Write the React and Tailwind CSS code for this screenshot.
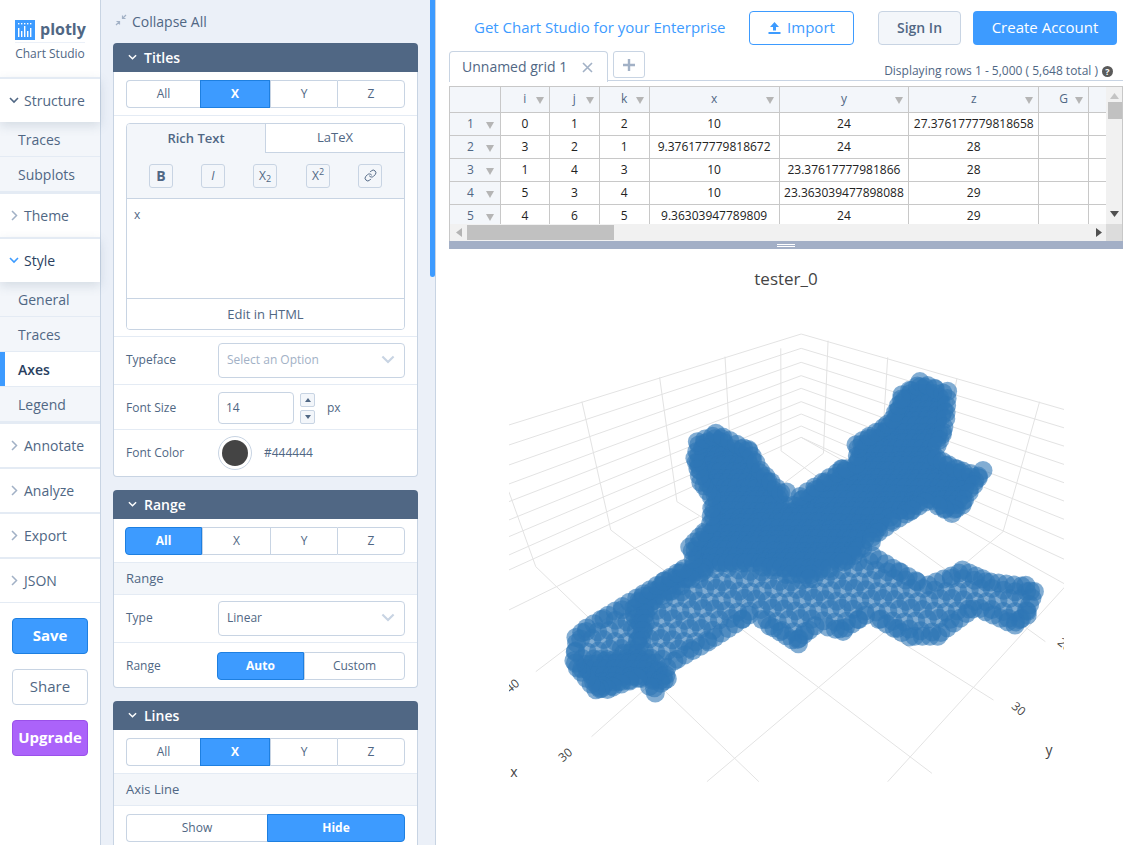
import React from "react";
import { Link as LinkIcon } from "lucide-react";

const Z = (x, y) => [480 + x / 2.6, 320 + y / 3];

const outline = [[1150,170],[1230,215],[1225,300],[1215,350],[1195,400],[1240,430],[1320,460],[1260,570],[1220,595],[1165,560],[1080,620],[1010,680],[1080,730],[1160,780],[1260,735],[1330,770],[1430,785],[1455,820],[1430,900],[1385,930],[1290,880],[1190,965],[1110,965],[1010,900],[940,950],[880,930],[820,985],[740,925],[725,885],[600,980],[500,1045],[495,1090],[445,1130],[415,1090],[330,1125],[290,1120],[240,1050],[230,1020],[240,940],[270,910],[400,820],[540,720],[535,670],[585,610],[590,540],[560,490],[545,410],[560,350],[620,325],[710,380],[740,440],[795,510],[805,530],[940,430],[965,430],[970,360],[1040,310],[1060,290],[1090,210]].map(([x, y]) => Z(x, y));
const dense = [[1150,150],[1340,460],[1220,610],[1000,700],[850,780],[720,740],[600,740],[440,860],[420,1000],[500,1050],[480,1140],[300,1130],[230,1030],[300,1020],[400,990],[400,820],[520,700],[530,400],[620,310],[800,500],[960,420],[1040,300]].map(([x, y]) => Z(x, y));

function inside(p, poly) {
  let c = false;
  for (let i = 0, j = poly.length - 1; i < poly.length; j = i++) {
    const [xi, yi] = poly[i], [xj, yj] = poly[j];
    if (yi > p[1] !== yj > p[1] && p[0] < ((xj - xi) * (p[1] - yi)) / (yj - yi) + xi) c = !c;
  }
  return c;
}
function edgeDist(p, poly) {
  let best = 1e9;
  for (let i = 0, j = poly.length - 1; i < poly.length; j = i++) {
    const [ax, ay] = poly[j], [bx, by] = poly[i];
    const dx = bx - ax, dy = by - ay;
    const t = Math.max(0, Math.min(1, ((p[0] - ax) * dx + (p[1] - ay) * dy) / (dx * dx + dy * dy)));
    best = Math.min(best, Math.hypot(p[0] - ax - t * dx, p[1] - ay - t * dy));
  }
  return best;
}
function makeCircles() {
  const out = [];
  const add = (sp, test, jit) => {
    for (let row = 0, y = 370; y < 705; y += sp * 0.87, row++) {
      for (let x = 565 + (row % 2) * sp * 0.5; x < 1045; x += sp) {
        const p = [x + Math.sin(x * 7.1 + y) * jit, y + Math.cos(y * 5.3 + x) * jit];
        if (test(p)) out.push(p);
      }
    }
  };
  add(11.5, (p) => inside(p, outline) && edgeDist(p, outline) >= 5, 1.8);
  add(6.5, (p) => inside(p, outline) && inside(p, dense) && edgeDist(p, outline) >= 7, 1);
  for (let i = 0, j = outline.length - 1; i < outline.length; j = i++) {
    const [ax, ay] = outline[j], [bx, by] = outline[i];
    const len = Math.hypot(bx - ax, by - ay);
    const n = Math.ceil(len / 9);
    for (let k = 0; k < n; k++) {
      const t = k / n;
      const nx = (by - ay) / len, ny = -(bx - ax) / len;
      const m = [ax + (bx - ax) * t, ay + (by - ay) * t];
      let p = [m[0] + nx * 5.5, m[1] + ny * 5.5];
      if (!inside(p, outline)) p = [m[0] - nx * 5.5, m[1] - ny * 5.5];
      out.push(p);
    }
  }
  return out;
}
const circles = makeCircles();

const cy = [42, 85, 127, 167, 205, 245, 282, 318, 352];
const ly = [315, 375, 435, 492, 545, 600, 650, 705, 750];
const ry = [270, 325, 380, 435, 490, 545, 600, 660, 720];
const segs = [
  ...cy.map((y, i) => [835, y, 75, ly[i]]),
  ...cy.map((y, i) => [835, y, 1523, ry[i]]),
  [782, 85, 783, 392], [637, 110, 655, 470], [467, 172, 512, 545], [265, 245, 340, 630], [75, 515, 145, 740],
  [905, 62, 893, 400], [1060, 112, 1040, 480], [1240, 175, 1205, 390], [1455, 245, 1360, 635],
  [893, 400, 145, 1055], [1040, 480, 290, 1250], [1360, 635, 590, 1385], [1525, 795, 1060, 1385], [570, 590, 75, 870],
  [782, 392, 1470, 965], [512, 545, 1335, 1140], [340, 630, 1175, 1360], [145, 740, 725, 1385], [835, 352, 1525, 795],
];

function Plot() {
  return (
    <svg viewBox="436 249 691 596" className="block w-[691px] h-[596px]">
      <defs>
        <clipPath id="plotclip"><rect x="509" y="320" width="555" height="463" /></clipPath>
      </defs>
      <text x="786" y="285" textAnchor="middle" fontSize="17" fill="#444">tester_0</text>
      <g clipPath="url(#plotclip)">
        {segs.map(([a, b, c, d], i) => {
          const [x1, y1] = Z(a, b), [x2, y2] = Z(c, d);
          return <line key={i} x1={x1} y1={y1} x2={x2} y2={y2} stroke="#e3e3e3" strokeWidth="1" />;
        })}
        <g fill="#2f76b6" fillOpacity="0.6">
          {circles.map((p, i) => <circle key={i} cx={p[0].toFixed(1)} cy={p[1].toFixed(1)} r="9.5" />)}
        </g>
        <g fontSize="12" fill="#444">
          <text transform="translate(515 689) rotate(-40)" textAnchor="middle">40</text>
          <text transform="translate(568 758) rotate(-40)" textAnchor="middle">30</text>
          <text transform="translate(1016 712) rotate(40)" textAnchor="middle">30</text>
          <text transform="translate(1062 648) rotate(40)" textAnchor="middle">20</text>
        </g>
        <g fontSize="14" fill="#444">
          <text x="514" y="777" textAnchor="middle">x</text>
          <text x="1049" y="755" textAnchor="middle">y</text>
        </g>
      </g>
    </svg>
  );
}

const ChevD = ({ c = "#506784", w = 10, h = 7, sw = 1.6 }) => (
  <svg width={w} height={h} viewBox="0 0 10 7" fill="none" stroke={c} strokeWidth={sw} className="shrink-0"><path d="M1 1l4 4 4-4" /></svg>
);
const ChevR = () => (
  <svg width="7" height="11" viewBox="0 0 7 11" fill="none" stroke="#a2b1c6" strokeWidth="1.5"><path d="M1 1l4.5 4.5L1 10" /></svg>
);

function Section({ label, open, active }) {
  return (
    <div className={"h-[45px] flex items-center bg-white border-t-2 border-[#e4ebf4] relative " + (open ? "shadow-[0_4px_10px_rgba(80,103,132,0.18)] z-10" : "")}>
      <span className="w-[24px] flex justify-center pl-[4px] shrink-0">
        {open ? <ChevD c={active ? "#3d9bff" : "#506784"} /> : <ChevR />}
      </span>
      <span className={"text-sm " + (active ? "text-[#2a3f5f]" : "text-[#506784]")}>{label}</span>
    </div>
  );
}
function Sub({ label, active }) {
  return (
    <div className={"h-[35px] flex items-center pl-[18px] pt-[1px] border-b border-[#e4ebf4] text-sm relative " + (active ? "bg-white text-[#2a3f5f] font-semibold" : "bg-[#f3f6fa] text-[#506784]")}>
      {active && <span className="absolute left-0 top-0 bottom-0 w-[5px] bg-[#3d9bff]" />}
      {label}
    </div>
  );
}

function Logo() {
  const bars = [9, 6, 11, 6, 9];
  return (
    <div className="h-[77px] flex flex-col items-center bg-white">
      <div className="flex items-center h-[23px] mt-[18px] gap-[5px] w-[70px]">
        <svg width="20" height="20" viewBox="0 0 20 20" className="shrink-0">
          <rect width="20" height="20" fill="#3d9bff" />
          {bars.map((h, i) => (
            <g key={i} fill="#fff">
              <rect x={3 + i * 3} y={17 - h} width="1.4" height={h} />
              <rect x={3 + i * 3} y="3" width="1.4" height="1.4" />
            </g>
          ))}
        </svg>
        <span className="text-[16px] leading-none font-bold text-[#506784] -mt-[1px]">plotly</span>
      </div>
      <div className="w-[70px] border-t border-[#ebf0f8] mt-[1px] pt-[3px] text-xs text-[#506784] text-center whitespace-nowrap">Chart Studio</div>
    </div>
  );
}

function Sidebar() {
  return (
    <aside className="w-[101px] shrink-0 h-full bg-[#ebf0f8] border-r border-[#c8d4e3] flex flex-col">
      <Logo />
      <Section label="Structure" open />
      <Sub label="Traces" />
      <Sub label="Subplots" />
      <Section label="Theme" />
      <Section label="Style" open active />
      <Sub label="General" />
      <Sub label="Traces" />
      <Sub label="Axes" active />
      <Sub label="Legend" />
      <Section label="Annotate" />
      <Section label="Analyze" />
      <Section label="Export" />
      <Section label="JSON" />
      <div className="flex-1 bg-white border-t border-[#e4ebf4] pt-[15px] px-[12px] flex flex-col gap-[15px]">
        <button className="h-[36px] pb-[2px] rounded-[4px] bg-[#3d9bff] border border-[#1e7fe0] text-white text-[15px] font-bold">Save</button>
        <button className="h-[36px] pb-[2px] rounded-[4px] bg-white border border-[#c8d4e3] text-[#506784] text-[15px] font-medium">Share</button>
        <button className="h-[36px] pb-[2px] rounded-[4px] bg-[#ab63fa] border border-[#9a50ea] text-white text-[15px] font-bold">Upgrade</button>
      </div>
    </aside>
  );
}

function Radio({ items, active, widths, shift }) {
  return (
    <div className={"flex h-[28px] text-xs " + (shift ? "-ml-[1px]" : "")}>
      {items.map((it, i) => {
        const on = it === active;
        return (
          <div
            key={it}
            style={{ width: widths[i] }}
            className={
              "flex items-center justify-center border-y border-l " +
              (i === items.length - 1 ? "border-r rounded-r-[4px] " : "") +
              (i === 0 ? "rounded-l-[4px] " : "") +
              (on ? "bg-[#3d9bff] border-[#1e7fe0] border-r text-white font-bold" : "bg-white border-[#c8d4e3] text-[#506784]")
            }
          >
            {it}
          </div>
        );
      })}
    </div>
  );
}

const Fold = ({ title, children }) => (
  <div className="mb-[13px] w-[305px]">
    <div className="h-[29px] bg-[#506784] rounded-t-[4px] flex items-center text-white text-sm font-semibold">
      <span className="w-[31px] flex justify-end pr-[7px]"><ChevD c="#fff" w={9} /></span>
      {title}
    </div>
    <div className="bg-white border-x border-b border-[#c8d4e3] rounded-b-[4px]">{children}</div>
  </div>
);

const Axes = ({ active, widths, shift }) => (
  <div className="pt-[8px] pb-[8px] px-[12px] border-b border-[#e4ebf4] h-[44px]">
    <Radio items={["All", "X", "Y", "Z"]} active={active} widths={widths} shift={shift} />
  </div>
);

const Row = ({ label, h, children, last, extra = "" }) => (
  <div style={{ height: h }} className={"flex items-center px-[12px] " + extra + (last ? "" : " border-b border-[#e4ebf4]")}>
    <span className="w-[92px] text-xs text-[#506784] shrink-0 -mt-[1px]">{label}</span>
    {children}
  </div>
);

const Select = ({ value, placeholder }) => (
  <div className="w-[187px] h-[35px] border border-[#c8d4e3] rounded-[4px] flex items-center justify-between pl-[8px] pr-[9px] pb-[1px] text-xs bg-white">
    <span className={placeholder ? "text-[#a2b1c6]" : "text-[#506784]"}>{value}</span>
    <ChevD c="#c8d4e3" w={14} h={10} sw={1.5} />
  </div>
);

const SubHead = ({ children }) => (
  <div className="h-[32px] pt-[1px] flex items-center px-[12px] bg-[#f3f6fa] border-b border-[#e4ebf4] text-[13px] font-medium text-[#506784]">{children}</div>
);

const ToolBtn = ({ children, ml }) => (
  <div style={{ marginLeft: ml }} className="w-[24px] h-[24px] border border-[#c8d4e3] rounded-[3px] flex items-center justify-center text-[#506784] text-[14px]">{children}</div>
);

function Editor() {
  return (
    <div className="mx-[12px] mt-[7px] border border-[#c8d4e3] rounded-[4px] h-[207px] flex flex-col overflow-hidden">
      <div className="flex h-[29px] text-[13px] shrink-0">
        <div className="w-[138px] bg-[#f3f6fa] flex items-center justify-center font-semibold text-[#506784]">Rich Text</div>
        <div className="flex-1 bg-white border-l border-b border-[#c8d4e3] flex items-center justify-center text-[#506784]">LaTeX</div>
      </div>
      <div className="h-[46px] bg-[#f3f6fa] border-b border-[#c8d4e3] flex items-center pl-[22px] shrink-0">
        <ToolBtn ml={0}><b>B</b></ToolBtn>
        <ToolBtn ml={28}><i className="text-xs">I</i></ToolBtn>
        <ToolBtn ml={28}><span className="text-xs">X<sub>2</sub></span></ToolBtn>
        <ToolBtn ml={29}><span className="text-xs">X<sup>2</sup></span></ToolBtn>
        <ToolBtn ml={28}><LinkIcon size={13} strokeWidth={1.8} /></ToolBtn>
      </div>
      <div className="flex-1 px-[7px] pt-[8px] text-xs text-[#506784] bg-white">x</div>
      <div className="h-[31px] pt-[2px] border-t border-[#c8d4e3] flex items-center justify-center text-[13px] text-[#506784] shrink-0 bg-white">Edit in HTML</div>
    </div>
  );
}

function Panel() {
  return (
    <div className="w-[335px] shrink-0 h-full bg-[#ebf0f8] border-r border-[#c8d4e3] pl-[12px] relative overflow-hidden">
      <span className="absolute top-0 left-[329px] w-[5px] h-[277px] bg-[#3d9bff] rounded-b-[3px]" />
      <div className="h-[43px] flex items-center gap-[5px] pl-[2px] text-sm text-[#506784]">
        <svg width="12" height="12" viewBox="0 0 12 12" fill="none" stroke="#a2b1c6" strokeWidth="1.2" className="-mt-[3px]">
          <path d="M11 1L7.5 4.5M7.5 1.5v3h3M1 11l3.5-3.5M1.5 7.5h3v3" />
        </svg>
        Collapse All
      </div>
      <Fold title="Titles">
        <Axes active="X" widths={[74, 70, 67, 68]} />
        <Editor />
        <div className="h-[7px] border-b border-[#e4ebf4]" />
        <Row label="Typeface" h={48}><Select value="Select an Option" placeholder /></Row>
        <Row label="Font Size" h={45} extra="pt-[2px]">
          <div className="w-[76px] h-[32px] border border-[#c8d4e3] rounded-[4px] flex items-center pl-[7px] text-xs text-[#506784]">14</div>
          <div className="ml-[6px] flex flex-col gap-[3px]">
            <div className="w-[15px] h-[14px] bg-[#f3f6fa] border border-[#c8d4e3] rounded-[2px] flex items-center justify-center">
              <svg width="6" height="4" viewBox="0 0 6 4"><path d="M3 0l3 4H0z" fill="#506784" /></svg>
            </div>
            <div className="w-[15px] h-[14px] bg-[#f3f6fa] border border-[#c8d4e3] rounded-[2px] flex items-center justify-center">
              <svg width="6" height="4" viewBox="0 0 6 4"><path d="M3 4l3-4H0z" fill="#506784" /></svg>
            </div>
          </div>
          <span className="ml-[12px] text-xs text-[#506784]">px</span>
        </Row>
        <Row label="Font Color" h={46} last>
          <span className="w-[34px] h-[34px] rounded-full border border-[#c8d4e3] bg-white flex items-center justify-center shrink-0">
            <span className="w-[26px] h-[26px] rounded-full bg-[#444444]" />
          </span>
          <span className="ml-[12px] text-xs text-[#506784]">#444444</span>
        </Row>
      </Fold>
      <Fold title="Range">
        <Axes active="All" widths={[77, 68, 67, 68]} shift />
        <SubHead>Range</SubHead>
        <Row label="Type" h={48}><Select value="Linear" /></Row>
        <Row label="Range" h={44} last extra="pt-[2px]">
          <Radio items={["Auto", "Custom"]} active="Auto" widths={[87, 101]} shift />
        </Row>
      </Fold>
      <Fold title="Lines">
        <Axes active="X" widths={[74, 70, 67, 68]} />
        <SubHead>Axis Line</SubHead>
        <div className="pt-[8px] px-[12px] h-[60px]">
          <Radio items={["Show", "Hide"]} active="Hide" widths={[141, 138]} />
        </div>
      </Fold>
    </div>
  );
}

const Tri = ({ c = "#b5b5b5" }) => (
  <svg width="8" height="7" viewBox="0 0 8 7" className="shrink-0"><path d="M0 0h8L4 7z" fill={c} /></svg>
);

const cols = [49, 50, 50, 130, 130, 130, 50, 17];
const heads = ["i", "j", "k", "x", "y", "z", "G", ""];
const rows = [
  ["0", "1", "2", "10", "24", "27.376177779818658"],
  ["3", "2", "1", "9.376177779818672", "24", "28"],
  ["1", "4", "3", "10", "23.37617777981866", "28"],
  ["5", "3", "4", "10", "23.363039477898088", "29"],
  ["4", "6", "5", "9.36303947789809", "24", "29"],
];

function Grid() {
  return (
    <div className="w-[674px] ml-[13px] border-l border-r border-t border-[#c8c8c8] mt-[5px]">
      <div className="flex h-[137px]">
        <div className="w-[657px] overflow-hidden text-xs">
          <div className="flex h-[26px] bg-[#f3f6fa] border-b border-[#c8c8c8] text-[#506784]">
            <div className="w-[51px] border-r border-[#c8c8c8]" />
            {heads.map((h, i) => (
              <div key={i} style={{ width: cols[i] }} className={"relative flex items-center justify-center " + (i < 7 ? "border-r border-[#c8c8c8]" : "")}>
                <span className="-mt-[2px]">{h}</span>
                {h && <span className="absolute right-[5px] top-[10px] flex"><Tri /></span>}
              </div>
            ))}
          </div>
          {rows.map((r, i) => (
            <div key={i} className="flex h-[23px] border-b border-[#c8c8c8] text-[#222]">
              <div className="w-[51px] bg-[#f3f6fa] border-r border-[#c8c8c8] relative flex items-center justify-center pr-[9px] text-[#506784]">
                {i + 1}
                <span className="absolute right-[6px] top-[9px] flex"><Tri /></span>
              </div>
              {cols.map((w, j) => (
                <div key={j} style={{ width: w }} className={"flex items-center justify-center whitespace-nowrap " + (j < 7 ? "border-r border-[#c8c8c8]" : "")}>{r[j] || ""}</div>
              ))}
            </div>
          ))}
        </div>
        <div className="w-[16px] bg-[#f1f1f1] flex flex-col items-center relative">
          <svg width="9" height="6" viewBox="0 0 9 6" className="mt-[6px]"><path d="M4.5 0L9 6H0z" fill="#c4c4c4" /></svg>
          <div className="w-[14px] h-[17px] bg-[#c1c1c1] mt-[3px] ml-[1px]" />
          <svg width="9" height="6" viewBox="0 0 9 6" className="mt-auto mb-[7px]"><path d="M4.5 6L9 0H0z" fill="#505050" /></svg>
        </div>
      </div>
      <div className="flex h-[17px] bg-[#f1f1f1] items-center">
        <svg width="6" height="9" viewBox="0 0 6 9" className="ml-[6px]"><path d="M0 4.5L6 0v9z" fill="#b4b4b4" /></svg>
        <div className="w-[147px] h-[15px] bg-[#c1c1c1] ml-[5px]" />
        <svg width="6" height="9" viewBox="0 0 6 9" className="ml-[482px]"><path d="M6 4.5L0 0v9z" fill="#505050" /></svg>
        <div className="ml-auto w-[16px] h-full bg-[#dcdcdc]" />
      </div>
    </div>
  );
}

function Right() {
  return (
    <div className="flex-1 min-w-0 h-full bg-white flex flex-col">
      <div className="h-[51px] shrink-0 flex items-start pt-[11px] pl-[38px]">
        <span className="h-[34px] pb-[2px] w-[275px] flex items-center text-[15px] text-[#3d9bff] whitespace-nowrap">Get Chart Studio for your Enterprise</span>
        <button className="w-[105px] h-[34px] pb-[1px] rounded-[4px] border border-[#3d9bff] text-[#3d9bff] text-[15px] flex items-center justify-center gap-[6px]">
          <svg width="13" height="13" viewBox="0 0 13 13" fill="#3d9bff" className="shrink-0"><path d="M6.5 1L11 6H8v3.5H5V6H2zM0.5 11h12v2H0.5z" /></svg>
          Import
        </button>
        <button className="w-[83px] h-[34px] ml-[24px] rounded-[4px] border border-[#c8d4e3] bg-[#f3f6fa] text-[#506784] text-sm font-semibold">Sign In</button>
        <button className="w-[144px] h-[34px] pb-[2px] ml-[12px] rounded-[4px] bg-[#3d9bff] text-white text-[15px]">Create Account</button>
      </div>
      <div className="h-[30px] shrink-0 flex pl-[13px] items-start">
        <div className="w-[159px] h-[31px] -mb-[1px] bg-white border border-b-0 border-[#c8d4e3] rounded-t-[4px] flex items-center pl-[12px] text-sm text-[#506784] relative z-10">
          Unnamed grid 1
          <svg width="11" height="11" viewBox="0 0 11 11" stroke="#a2b1c6" strokeWidth="1.6" className="ml-[15px]"><path d="M1 1l9 9M10 1l-9 9" /></svg>
        </div>
        <div className="flex-1 h-[30px] border-b border-[#c8d4e3] flex items-start mr-[4px]">
          <div className="ml-[5px] w-[32px] h-[27px] border border-[#c8d4e3] rounded-[3px] flex items-center justify-center">
            <svg width="12" height="12" viewBox="0 0 12 12" stroke="#a2b1c6" strokeWidth="2.4"><path d="M6 0v12M0 6h12" /></svg>
          </div>
          <div className="ml-auto mt-[12px] mr-[10px] flex items-center gap-[4px] text-xs leading-[16px] text-[#506784] whitespace-nowrap">
            Displaying rows 1 - 5,000 ( 5,648 total )
            <span className="w-[11px] h-[11px] rounded-full bg-[#5a5a5a] text-white text-[9px] leading-[11px] font-bold text-center">?</span>
          </div>
        </div>
      </div>
      <Grid />
      <div className="w-[674px] ml-[13px] h-[8px] shrink-0 bg-[#a3afc6] flex flex-col items-center justify-center gap-[1px]">
        <span className="w-[18px] h-px bg-white" />
        <span className="w-[18px] h-px bg-white" />
      </div>
      <Plot />
    </div>
  );
}

export default function App() {
  return (
    <div className="w-full h-[845px] overflow-hidden flex font-['Open_Sans',sans-serif]">
      <Sidebar />
      <Panel />
      <Right />
    </div>
  );
}
